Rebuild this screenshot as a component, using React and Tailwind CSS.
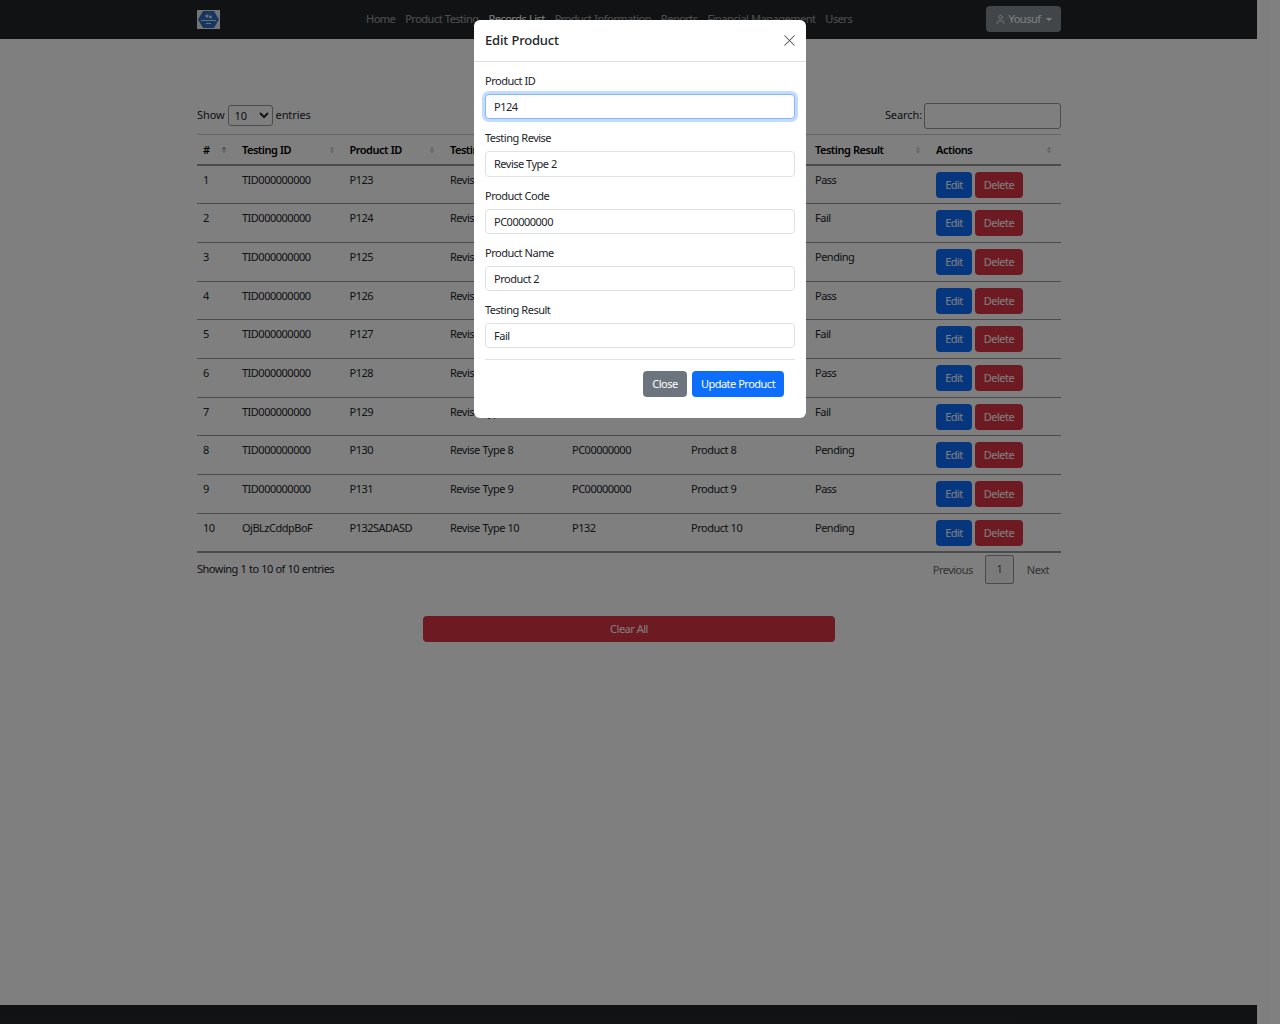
import React from "react";
import { X, User } from "lucide-react";

const rows = [
  ["1","TID000000000","P123","Revise Type 1","PC00000000","Product 1","Pass"],
  ["2","TID000000000","P124","Revise Type 2","PC00000000","Product 2","Fail"],
  ["3","TID000000000","P125","Revise Type 3","PC00000000","Product 3","Pending"],
  ["4","TID000000000","P126","Revise Type 4","PC00000000","Product 4","Pass"],
  ["5","TID000000000","P127","Revise Type 5","PC00000000","Product 5","Fail"],
  ["6","TID000000000","P128","Revise Type 6","PC00000000","Product 6","Pass"],
  ["7","TID000000000","P129","Revise Type 7","PC00000000","Product 7","Fail"],
  ["8","TID000000000","P130","Revise Type 8","PC00000000","Product 8","Pending"],
  ["9","TID000000000","P131","Revise Type 9","PC00000000","Product 9","Pass"],
  ["10","OjBLzCddpBoF","P132SADASD","Revise Type 10","P132","Product 10","Pending"],
];
const heads = [
  ["#", "w-[39px]"], ["Testing ID", "w-[107.5px]"], ["Product ID", "w-[100.5px]"], ["Testing Revise", "w-[122px]"],
  ["Product Code", "w-[119px]"], ["Product Name", "w-[124px]"], ["Testing Result", "w-[121px]"], ["Actions", "w-[131px]"],
];
const nav = ["Home","Product Testing","Records List","Product Information","Reports","Financial Management","Users"];
const fields = [["Product ID","P124"],["Testing Revise","Revise Type 2"],["Product Code","PC00000000"],["Product Name","Product 2"],["Testing Result","Fail"]];

function Sort({ active }) {
  return (
    <span className="absolute right-[10px] top-1/2 -translate-y-1/2 flex flex-col items-center gap-[1px]">
      <span className={`w-0 h-0 border-x-[2.5px] border-x-transparent border-b-[3px] ${active ? "border-b-[#888]" : "border-b-[#c4c4c4]"}`} />
      <span className="w-0 h-0 border-x-[2.5px] border-x-transparent border-t-[3px] border-t-[#c4c4c4]" />
    </span>
  );
}

export default function App() {
  return (
    <div className="relative h-[1024px] bg-white text-[11px] tracking-[-0.5px] [word-spacing:0.3px] leading-[18px] text-[#212529] overflow-hidden font-['Noto_Sans','Roboto',sans-serif]">
      <div className="w-[1257px] h-full flex flex-col">
        <header className="h-[39px] bg-[#212529] flex items-center pl-[197px] pr-[196px] shrink-0">
          <svg width="23" height="19" viewBox="0 0 23 19" className="shrink-0">
            <rect width="23" height="19" fill="#e8e8e8" />
            <polygon points="6,1 17,1 22,9.5 17,18 6,18 1,9.5" fill="#2f6fc0" />
            <circle cx="10" cy="6" r="1.6" fill="#dfe9f5" />
            <circle cx="13.5" cy="7" r="1.4" fill="#dfe9f5" />
            <rect x="4" y="10" width="15" height="1" fill="#cfe0f2" />
            <rect x="9" y="13" width="5" height="1" fill="#cfe0f2" />
          </svg>
          <nav className="flex ml-[146px] gap-[9.9px] pb-[2px]">
            {nav.map((n) => (
              <a key={n} className={n === "Records List" ? "text-white" : "text-white/55"}>{n}</a>
            ))}
          </nav>
          <button className="ml-auto mb-[1px] w-[75px] h-[26px] rounded-[4px] bg-[#868c92] text-white flex items-center justify-center gap-[3px]">
            <User size={11} strokeWidth={1.6} />
            <span className="pb-[1px]">Yousuf</span>
            <span className="ml-[3px] w-0 h-0 border-x-[3.5px] border-x-transparent border-t-[3.5px] border-t-white" />
          </button>
        </header>

        <main className="w-[864px] ml-[197px] flex-1">
          <div className="flex items-center justify-between mt-[64px] h-[26px] tracking-[-0.1px]">
            <div className="flex items-center">
              <span className="pb-[2px]">Show</span>
              <select className="ml-[3px] mb-[2px] w-[45px] h-[21px] border border-[#999] rounded-[3px] bg-white pl-[2px]" defaultValue="10">
                <option>10</option>
              </select>
              <span className="ml-[3px] pb-[2px]">entries</span>
            </div>
            <div className="flex items-center">
              <span className="pb-[2px]">Search:</span>
              <input className="ml-[2px] w-[137px] h-[26px] border border-[#999] rounded-[3px] bg-white" />
            </div>
          </div>

          <table className="w-full table-fixed mt-[5px] border-t border-[#ccc] border-collapse">
            <thead>
              <tr className="border-b-2 border-[#999]">
                {heads.map(([h, w], i) => (
                  <th key={h} className={`${w} relative h-[30.67px] px-[6px] text-left font-semibold text-black`}>
                    {h}
                    <Sort active={i === 0} />
                  </th>
                ))}
              </tr>
            </thead>
            <tbody>
              {rows.map((r, i) => (
                <tr key={i} className={i === 9 ? "border-b-2 border-[#999]" : "border-b border-[#999]"}>
                  {r.map((c, j) => (
                    <td key={j} className="h-[38.67px] px-[6px] pt-[5px] align-top">{c}</td>
                  ))}
                  <td className="h-[38.67px] px-[6px] pt-[6px] align-top">
                    <div className="flex gap-[3px]">
                      <button className="w-[36px] h-[26px] rounded-[4px] bg-[#0d6efd] text-white">Edit</button>
                      <button className="w-[48px] h-[26px] rounded-[4px] bg-[#dc3545] text-white">Delete</button>
                    </div>
                  </td>
                </tr>
              ))}
            </tbody>
          </table>

          <div className="flex items-start justify-between">
            <div className="mt-[7px]">Showing 1 to 10 of 10 entries</div>
            <div className="flex items-center mt-[2px] mr-[12px] text-[#666]">
              <span className="pt-[1px]">Previous</span>
              <span className="ml-[12px] w-[29px] h-[29px] border border-[#979797] rounded-[2px] bg-[#f4f4f4] text-[#555] flex items-center justify-center">1</span>
              <span className="ml-[13px] pt-[1px]">Next</span>
            </div>
          </div>

          <button className="block ml-[226px] mt-[32px] w-[412px] h-[26px] rounded-[4px] bg-[#dc3545] text-white">Clear All</button>
        </main>

        <footer className="h-[19px] bg-[#212529] shrink-0" />
      </div>

      <div className="absolute inset-0 bg-black/50" />

      <div className="absolute left-[474px] top-[20px] w-[332px] h-[398px] bg-white rounded-[6px] flex flex-col">
        <div className="h-[42px] border-b border-[#dee2e6] flex items-center justify-between pl-[11px] pr-[7px] shrink-0">
          <h5 className="text-[13px] tracking-[-0.2px] font-medium pb-[2px]">Edit Product</h5>
          <X size={19} strokeWidth={1.3} className="text-[#555]" />
        </div>
        <div className="px-[11px] pt-[10px]">
          {fields.map(([l, v], i) => (
            <div key={l} className={i === 4 ? "mb-[11px]" : "mb-[10px]"}>
              <label className="block mb-[4px]">{l}</label>
              <input
                readOnly
                value={v}
                className={`block w-full h-[25.25px] px-[8px] rounded-[4px] border bg-white text-[#212529] ${i === 0 ? "border-[#86b7fe] shadow-[0_0_0_3px_rgba(13,110,253,0.25)]" : "border-[#dee2e6]"}`}
              />
            </div>
          ))}
          <div className="border-t border-[#dee2e6] flex justify-end gap-[5px] pt-[11px] pr-[11px]">
            <button className="w-[44px] h-[26px] rounded-[4px] bg-[#6c757d] text-white">Close</button>
            <button className="w-[92px] h-[26px] rounded-[4px] bg-[#0d6efd] text-white">Update Product</button>
          </div>
        </div>
      </div>
    </div>
  );
}
